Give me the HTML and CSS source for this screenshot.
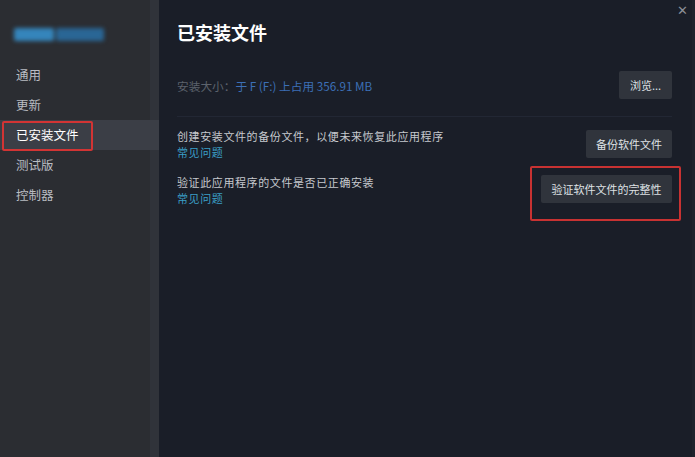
FILE: index.html
```html
<!DOCTYPE html>
<html lang="zh-CN">
<head>
<meta charset="utf-8">
<link rel="stylesheet" href="styles.css">
</head>
<body>
<div class="app">
  <aside class="sidebar">
    <div class="logo"><span class="logo-a"></span><span class="logo-b"></span></div>
    <nav class="nav">
      <div class="nav-item">通用</div>
      <div class="nav-item">更新</div>
      <div class="nav-item active"><span class="hl-box"></span>已安装文件</div>
      <div class="nav-item">测试版</div>
      <div class="nav-item">控制器</div>
    </nav>
  </aside>
  <main class="main">
    <div class="close">✕</div>
    <h1 class="title">已安装文件</h1>
    <div class="row row-size">
      <div class="size-text"><span class="label">安装大小：</span><span class="value">于 F (F:) 上占用 356.91 MB</span></div>
      <button class="btn btn-browse">浏览...</button>
    </div>
    <div class="row row-backup">
      <div class="desc">
        <div class="desc-text">创建安装文件的备份文件，以便未来恢复此应用程序</div>
        <div class="faq">常见问题</div>
      </div>
      <button class="btn btn-backup">备份软件文件</button>
    </div>
    <div class="row row-verify">
      <div class="desc">
        <div class="desc-text">验证此应用程序的文件是否已正确安装</div>
        <div class="faq">常见问题</div>
      </div>
      <div class="btn-wrap">
        <span class="hl-box2"></span>
        <button class="btn btn-verify">验证软件文件的完整性</button>
      </div>
    </div>
  </main>
  <div class="edge"></div>
</div>
</body>
</html>
```
FILE: styles.css
```css
* { box-sizing: border-box; }
html, body { margin: 0; padding: 0; }
body {
  width: 695px;
  height: 457px;
  overflow: hidden;
  background: #1a1e28;
  font-family: "Noto Sans CJK SC", "Noto Sans", sans-serif;
}
.app {
  display: flex;
  width: 695px;
  height: 457px;
  position: relative;
}
.sidebar {
  width: 159px;
  flex: none;
  background: linear-gradient(to right, #2b2d32 0, #2b2d32 150px, #30333a 150px, #30333a 159px);
  padding-top: 28px;
}
.logo {
  display: flex;
  gap: 2px;
  margin-left: 14px;
  height: 14px;
  filter: blur(2px);
}
.logo-a { width: 40px; height: 13px; background: #3585bb; border-radius: 2px; }
.logo-b { width: 48px; height: 13px; background: #2a6695; border-radius: 2px; }
.nav {
  margin-top: 18px;
  display: flex;
  flex-direction: column;
}
.nav-item {
  height: 30px;
  line-height: 30px;
  padding-left: 16px;
  font-size: 12.5px;
  color: #b9bcc2;
  position: relative;
}
.nav-item.active {
  background: #3b3e46;
  color: #ffffff;
}
.hl-box {
  position: absolute;
  left: 2px;
  top: 1px;
  width: 91px;
  height: 30px;
  border: 2px solid #d23434;
  border-radius: 2px;
}
.main {
  flex: 1;
  padding: 19px 23px 0 18px;
  position: relative;
}
.close {
  position: absolute;
  right: 7px;
  top: 0;
  font-size: 13px;
  color: #8b8f97;
}
.title {
  margin: 0;
  font-size: 18px;
  font-weight: 700;
  color: #ffffff;
  line-height: 27px;
}
.row {
  display: flex;
  justify-content: space-between;
  align-items: center;
}
.row-size {
  margin-top: 25px;
  height: 28px;
}
.row-backup {
  margin-top: 17px;
  border-top: 1px solid #222734;
  padding-top: 11px;
}
.size-text { font-size: 11.7px; }
.label { color: #5c626c; }
.value { color: #3c6fb6; }
.btn {
  font-family: inherit;
  border: none;
  background: #30343c;
  color: #dfe1e4;
  font-size: 11px;
  height: 28px;
  padding: 0;
  border-radius: 2px;
}
.btn-browse { width: 53px; }
.btn-backup { width: 86px; }
.desc { display: flex; flex-direction: column; }
.desc-text { font-size: 11px; letter-spacing: 0.6px; color: #c6c9ce; line-height: 16px; }
.faq { font-size: 11px; letter-spacing: 0.6px; color: #3b9ec6; line-height: 16px; }
.row-verify { margin-top: 14px; align-items: flex-start; }
.btn-wrap { position: relative; margin-top: 1px; }
.btn-verify { width: 131px; height: 28px; }
.hl-box2 {
  position: absolute;
  left: -11px;
  top: -9px;
  width: 151px;
  height: 55px;
  border: 2px solid #c83232;
  border-radius: 2px;
}
.edge {
  position: absolute;
  right: 0;
  top: 0;
  width: 3px;
  height: 457px;
  background: #1e222c;
}
```
